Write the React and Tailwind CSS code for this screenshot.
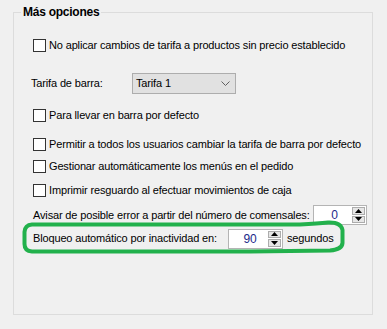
import React from 'react';

const font = { fontFamily: '"Liberation Sans", Arial, sans-serif' };

function Check({ label }) {
  return (
    <label className="flex items-center gap-[3px]">
      <span className="w-[13px] h-[13px] border border-[#333] bg-white shrink-0" />
      <span>{label}</span>
    </label>
  );
}

function Spinner({ value, width }) {
  return (
    <div className={`flex h-[20px] border border-[#b4b4b4] bg-white ${width}`}>
      <div className="flex-1 flex items-center justify-center text-[12px] text-[#1c2a8a] pl-[4px]">{value}</div>
      <div className="w-[15px] flex flex-col gap-[1px] p-[1px]">
        <div className="flex-1 bg-[#e6e6e6] border border-[#acacac] flex items-center justify-center">
          <svg width="7" height="4" viewBox="0 0 7 4"><path d="M0 4 L3.5 0 L7 4 Z" fill="#000" /></svg>
        </div>
        <div className="flex-1 bg-[#e6e6e6] border border-[#acacac] flex items-center justify-center">
          <svg width="7" height="4" viewBox="0 0 7 4"><path d="M0 0 L3.5 4 L7 0 Z" fill="#000" /></svg>
        </div>
      </div>
    </div>
  );
}

export default function App() {
  return (
    <div className="relative w-[387px] h-[329px] bg-[#f0f0f0] text-[11px] tracking-[-0.15px] text-black overflow-hidden" style={font}>
      <div className="pt-[4px] pl-[13px]">
        <fieldset className="w-[360px] h-[311px] border border-[#dcdcdc] pl-[19px]">
          <legend className="-ml-[12px] px-[2px] text-[12px] font-bold leading-[16px] tracking-[-0.25px]">Más opciones</legend>

          <div className="mt-[15px] h-[20px] flex items-center">
            <Check label="No aplicar cambios de tarifa a productos sin precio establecido" />
          </div>

          <div className="mt-[18px] h-[21px] flex items-center">
            <span className="w-[101px] -ml-[2px]">Tarifa de barra:</span>
            <div className="w-[104px] h-[21px] border border-[#adadad] bg-[#e1e1e1] flex items-center justify-between pl-[3px] pr-[5px]">
              <span>Tarifa 1</span>
              <svg width="9" height="5" viewBox="0 0 9 5"><path d="M0.5 0.5 L4.5 4.5 L8.5 0.5" fill="none" stroke="#606060" strokeWidth="1" /></svg>
            </div>
          </div>

          <div className="mt-[11px] h-[20px] flex items-center">
            <Check label="Para llevar en barra por defecto" />
          </div>

          <div className="mt-[9px] h-[20px] flex items-center">
            <Check label="Permitir a todos los usuarios cambiar la tarifa de barra por defecto" />
          </div>

          <div className="mt-[2px] h-[20px] flex items-center">
            <Check label="Gestionar automáticamente los menús en el pedido" />
          </div>

          <div className="mt-[4px] h-[20px] flex items-center">
            <Check label="Imprimir resguardo al efectuar movimientos de caja" />
          </div>

          <div className="mt-[5px] h-[20px] flex items-center">
            <span className="w-[280px]">Avisar de posible error a partir del número de comensales:</span>
            <Spinner value="0" width="w-[54px]" />
          </div>

          <div className="mt-[3px] h-[21px] flex items-center">
            <span className="w-[195px]">Bloqueo automático por inactividad en:</span>
            <Spinner value="90" width="w-[55px]" />
            <span className="ml-[4px]">segundos</span>
          </div>
        </fieldset>
      </div>

      <svg className="absolute left-0 top-0 pointer-events-none" width="387" height="329" viewBox="0 0 387 329">
        <path
          d="M32 224.5 L300 224.5 Q318 223.5 328 222.5 Q341 222 342.5 230 L342.5 243 Q342 249.5 330 250.5 L250 251.5 L32 251.5 Q24.5 251 24.5 244 L24.5 232 Q25 225 32 224.5 Z"
          fill="none"
          stroke="#22b14c"
          strokeWidth="4"
        />
      </svg>
    </div>
  );
}
